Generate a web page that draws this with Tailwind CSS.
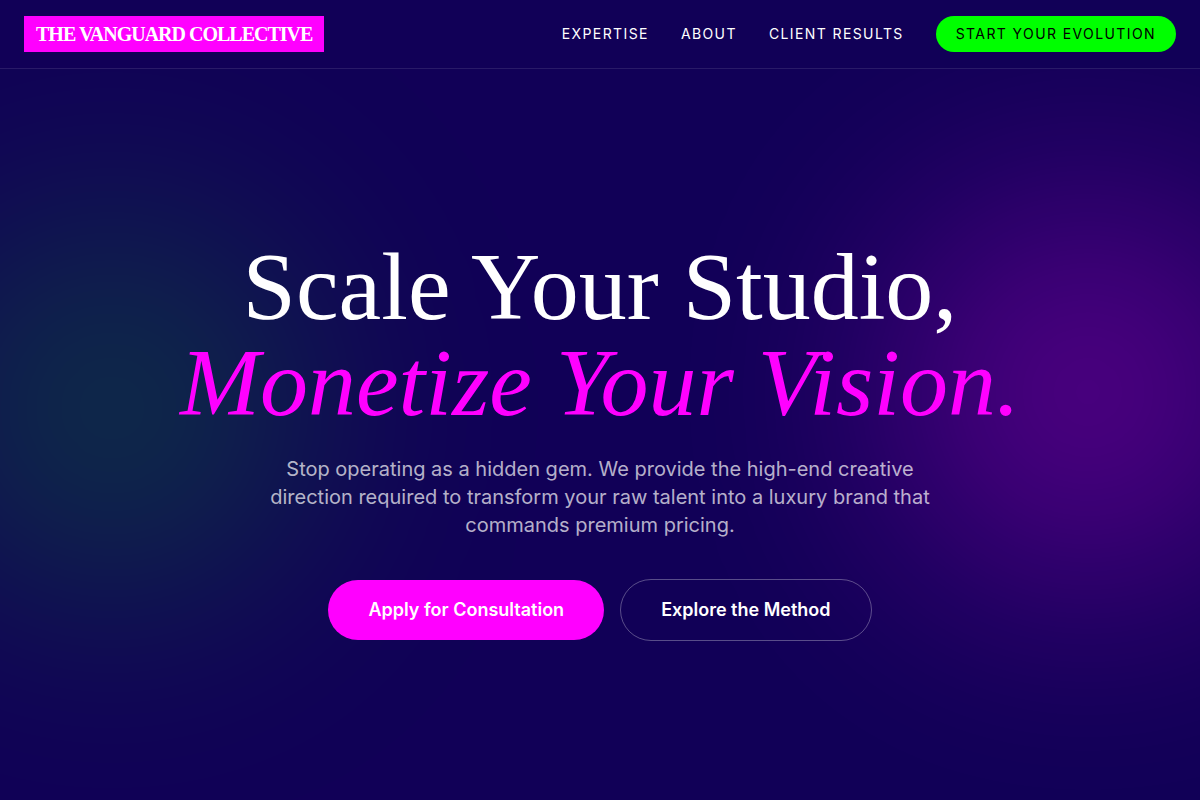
<!DOCTYPE html>
<html lang="en">
<head>
  <meta charset="UTF-8">
  <meta name="viewport" content="width=device-width, initial-scale=1.0">
  <title>The Vanguard Collective</title>
  <script src="https://cdn.jsdelivr.net/npm/@tailwindcss/browser@4"></script>
</head>
<body class="bg-[#110057] text-white font-['Inter',sans-serif]">
  <div class="relative isolate flex min-h-screen flex-col overflow-hidden">
    <!-- Background glows -->
    <div class="absolute top-1/4 -right-20 -z-10 size-96 rounded-full bg-[#ff00ff]/30 blur-[120px]"></div>
    <div class="absolute bottom-1/4 -left-20 -z-10 size-96 rounded-full bg-[#00ff00]/20 blur-[120px]"></div>

    <header class="border-b border-white/10 bg-[#110057]">
      <nav class="flex items-center justify-between px-6 py-4">
        <a href="#" class="bg-[#ff00ff] px-3 py-1 font-['Liberation_Serif',serif] text-xl font-bold tracking-tighter">THE VANGUARD COLLECTIVE</a>
        <div class="flex items-center gap-8 text-sm uppercase tracking-widest">
          <a href="#expertise">Expertise</a>
          <a href="#about">About</a>
          <a href="#results">Client Results</a>
          <a href="#apply" class="rounded-full bg-[#00ff00] px-5 py-2 text-black">Start Your Evolution</a>
        </div>
      </nav>
    </header>

    <main class="flex flex-1 items-center justify-center px-6 pt-2.5">
      <div class="max-w-5xl text-center">
        <h1 class="mb-6 font-['Liberation_Serif',serif] text-8xl leading-none">
          <span class="block">Scale Your Studio,</span>
          <span class="block italic text-[#ff00ff]">Monetize Your Vision.</span>
        </h1>
        <p class="mx-auto mb-10 max-w-2xl text-xl text-white/70">
          Stop operating as a hidden gem. We provide the high-end creative direction required to transform your raw talent into a luxury brand that commands premium pricing.
        </p>
        <div class="flex items-center justify-center gap-4">
          <button class="rounded-full bg-[#ff00ff] px-10 py-4 text-lg font-semibold">Apply for Consultation</button>
          <button class="rounded-full border border-white/30 px-10 py-4 text-lg font-semibold">Explore the Method</button>
        </div>
      </div>
    </main>
  </div>
</body>
</html>
